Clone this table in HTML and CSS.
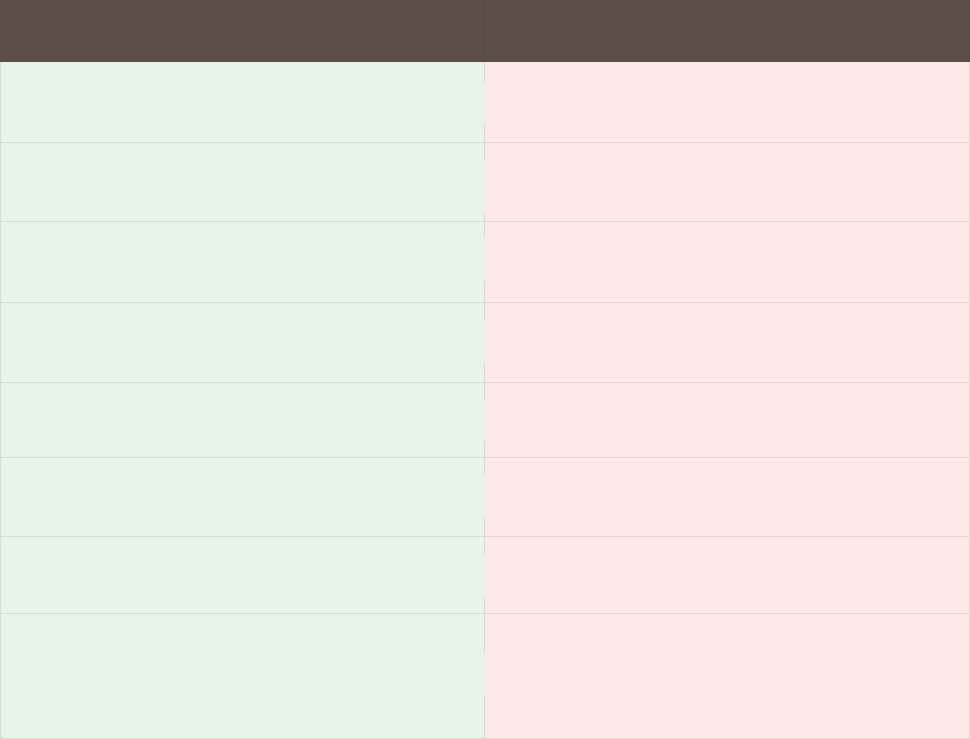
FILE: index.html
```html
<!DOCTYPE html>
<html lang="en">
<head>
<meta charset="utf-8">
<title>Comparison</title>
<link rel="stylesheet" href="styles.css">
</head>
<body>
<div class="board">
  <div class="head head-left"></div>
  <div class="head head-right"></div>

  <div class="cell pro r1"><div class="entry"></div></div><div class="cell con r1"></div>
  <div class="cell pro r2"><div class="entry"></div></div><div class="cell con r2"></div>
  <div class="cell pro r3"><div class="entry"></div></div><div class="cell con r3"></div>
  <div class="cell pro r4"><div class="entry"></div></div><div class="cell con r4"></div>
  <div class="cell pro r5"><div class="entry"></div></div><div class="cell con r5"></div>
  <div class="cell pro r6"><div class="entry"></div></div><div class="cell con r6"></div>
  <div class="cell pro r7"><div class="entry"></div></div><div class="cell con r7"></div>
  <div class="cell pro r8"><div class="entry"></div></div><div class="cell con r8"></div>
</div>
</body>
</html>
```
FILE: styles.css
```css
html, body {
  margin: 0;
  padding: 0;
  background: #ffffff;
  font-family: "Liberation Sans", Arial, sans-serif;
}

.board {
  display: grid;
  grid-template-columns: 485px 485px;
  width: 970px;
}

.head {
  height: 62px;
  background: #5c4e46;
  box-sizing: border-box;
}

.head-left {
  border-right: 1px solid #574840;
}

.cell {
  box-sizing: border-box;
  border-bottom: 1px solid rgba(0, 0, 0, 0.085);
  border-right: 1px solid rgba(0, 0, 0, 0.085);
}

.pro {
  background: #e9f4e9;
  border-left: 1px solid rgba(0, 0, 0, 0.085);
  padding-top: var(--pad, 18px);
}

.entry {
  height: var(--entry, 42px);
  margin-right: -1px;
  background: #e9f4e9;
}

.con {
  background: #fee8e8;
}

.r1 { height: 81px;  --pad: 20px; --entry: 42px; }
.r2 { height: 79px;  --pad: 17px; --entry: 53px; }
.r3 { height: 81px;  --pad: 16px; --entry: 43px; }
.r4 { height: 80px;  --pad: 18px; --entry: 42px; }
.r5 { height: 75px;  --pad: 18px; --entry: 40px; }
.r6 { height: 79px;  --pad: 17px; --entry: 43px; }
.r7 { height: 77px;  --pad: 18px; --entry: 43px; }
.r8 { height: 125px; --pad: 39px; --entry: 43px; }
```
